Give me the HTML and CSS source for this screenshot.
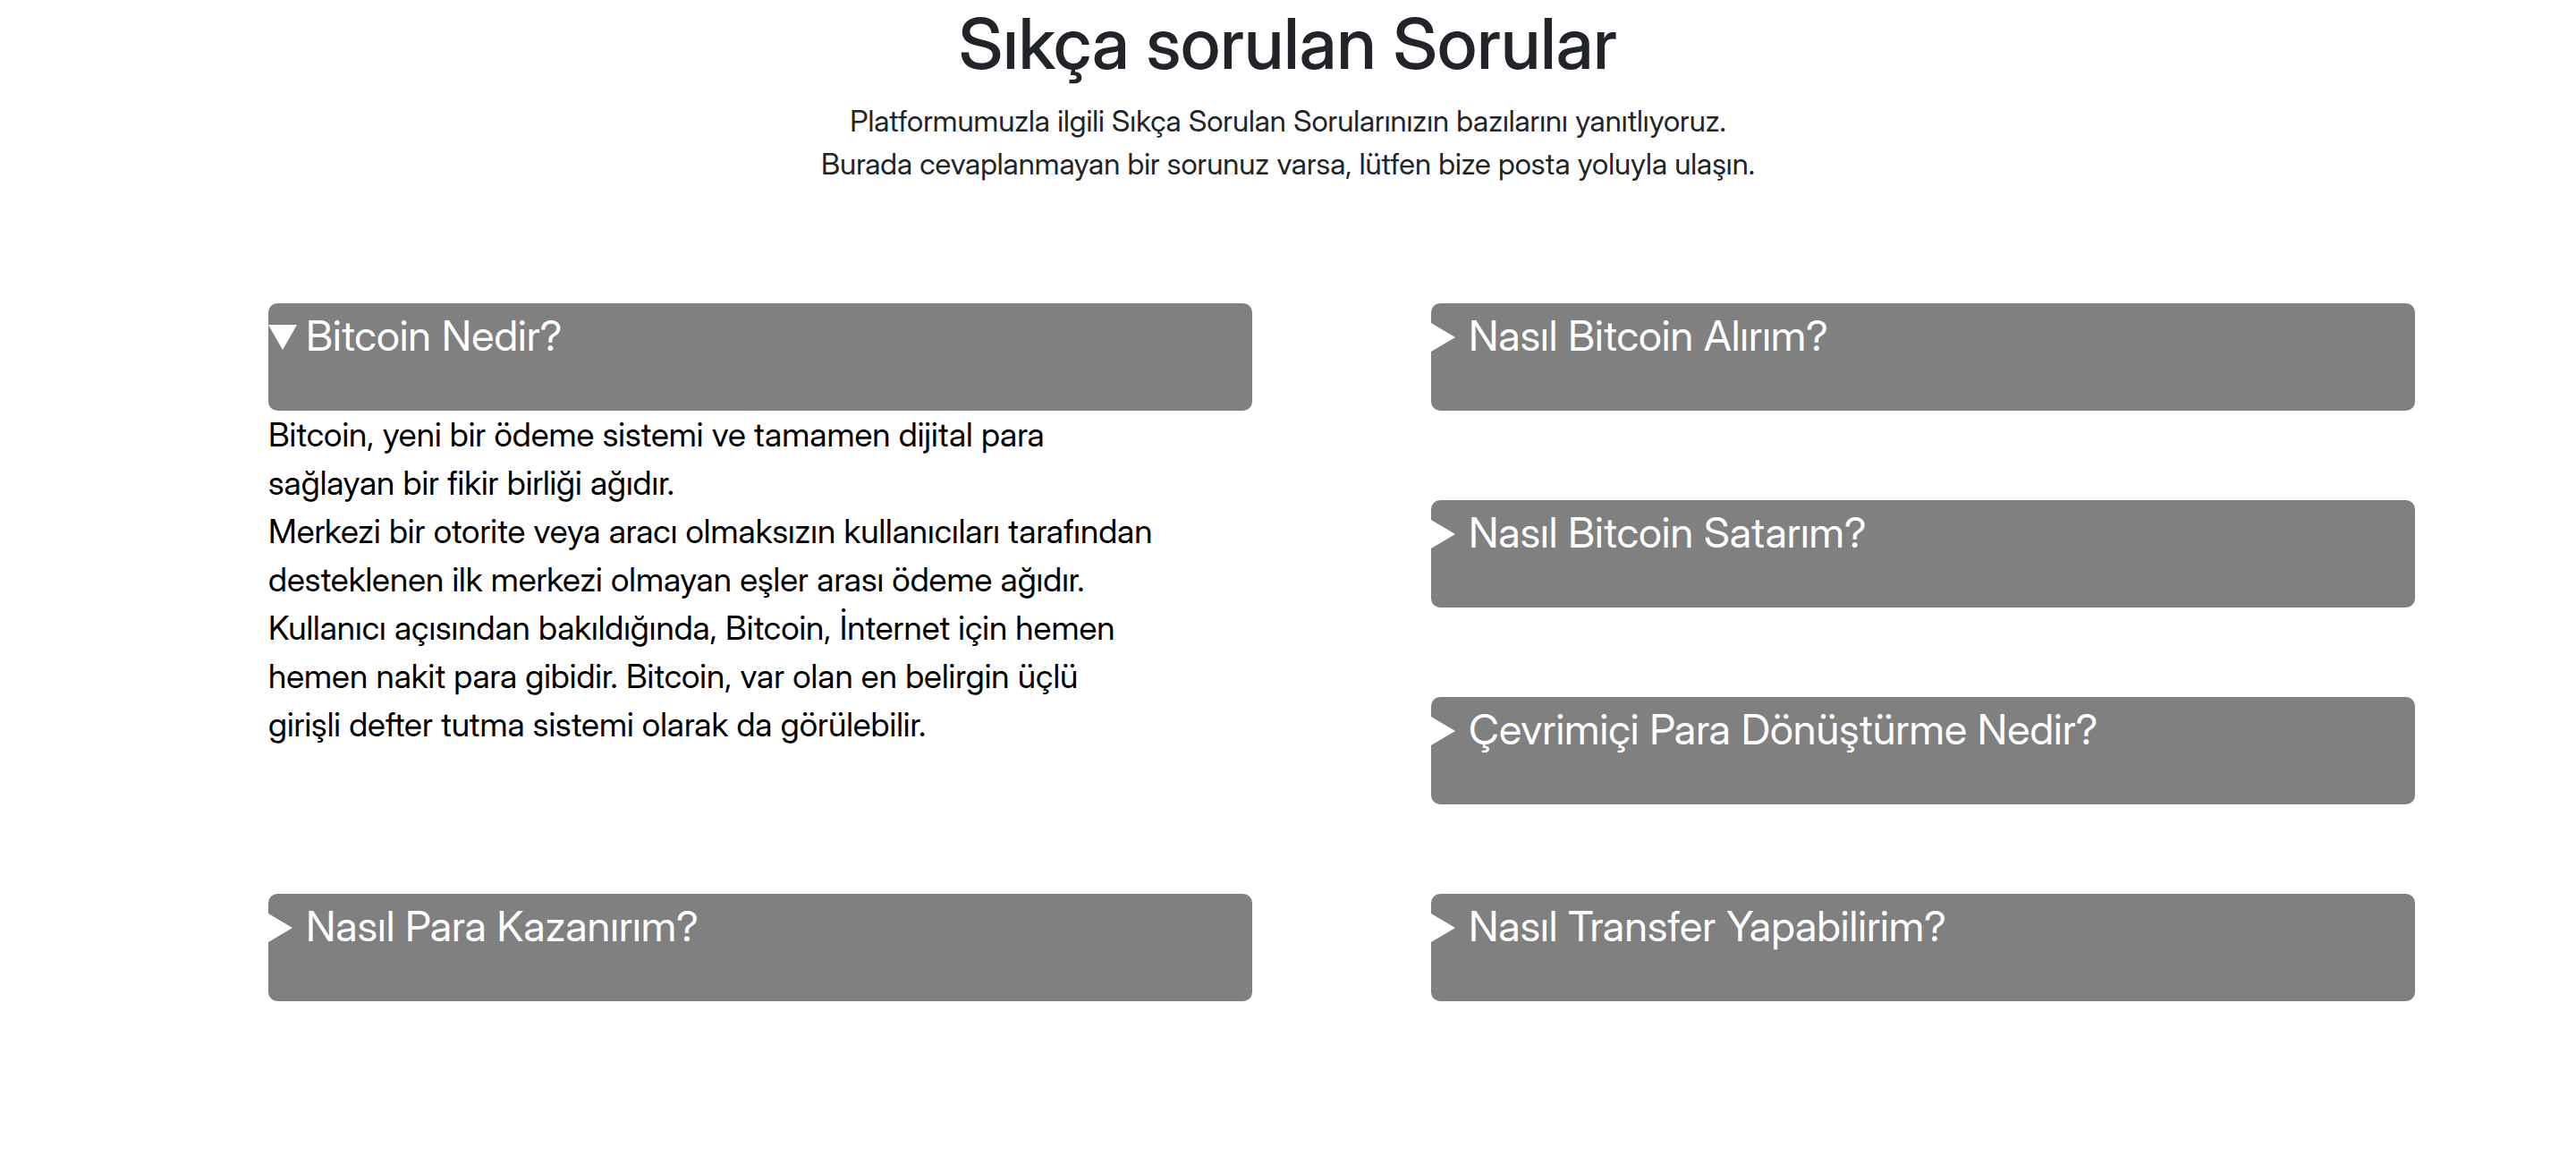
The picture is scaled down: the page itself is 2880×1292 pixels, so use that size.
FILE: index.html
```html
<!DOCTYPE html>
<html lang="tr">
<head>
<meta charset="utf-8">
<title>Sıkça sorulan Sorular</title>
<link rel="stylesheet" href="styles.css">
</head>
<body>
<main class="faq">
  <header class="intro">
    <h1 class="title">Sıkça sorulan Sorular</h1>
    <p class="lead">Platformumuzla ilgili Sıkça Sorulan Sorularınızın bazılarını yanıtlıyoruz.<br>Burada cevaplanmayan bir sorunuz varsa, lütfen bize posta yoluyla ulaşın.</p>
  </header>
  <div class="columns">
    <div class="column">
      <details class="item" open>
        <summary class="question"><svg class="marker" viewBox="0 0 34 32" aria-hidden="true"><path d="M0 2H32L16 30Z"/></svg><span>Bitcoin Nedir?</span></summary>
        <p class="answer">Bitcoin, yeni bir ödeme sistemi ve tamamen dijital para<br>sağlayan bir fikir birliği ağıdır.<br>Merkezi bir otorite veya aracı olmaksızın kullanıcıları tarafından<br>desteklenen ilk merkezi olmayan eşler arası ödeme ağıdır.<br>Kullanıcı açısından bakıldığında, Bitcoin, İnternet için hemen<br>hemen nakit para gibidir. Bitcoin, var olan en belirgin üçlü<br>girişli defter tutma sistemi olarak da görülebilir.</p>
      </details>
      <details class="item">
        <summary class="question"><svg class="marker" viewBox="0 0 34 32" aria-hidden="true"><path d="M0 0V32L27 16Z"/></svg><span>Nasıl Para Kazanırım?</span></summary>
      </details>
    </div>
    <div class="column">
      <details class="item">
        <summary class="question"><svg class="marker" viewBox="0 0 34 32" aria-hidden="true"><path d="M0 0V32L27 16Z"/></svg><span>Nasıl Bitcoin Alırım?</span></summary>
      </details>
      <details class="item">
        <summary class="question"><svg class="marker" viewBox="0 0 34 32" aria-hidden="true"><path d="M0 0V32L27 16Z"/></svg><span>Nasıl Bitcoin Satarım?</span></summary>
      </details>
      <details class="item">
        <summary class="question"><svg class="marker" viewBox="0 0 34 32" aria-hidden="true"><path d="M0 0V32L27 16Z"/></svg><span>Çevrimiçi Para Dönüştürme Nedir?</span></summary>
      </details>
      <details class="item">
        <summary class="question"><svg class="marker" viewBox="0 0 34 32" aria-hidden="true"><path d="M0 0V32L27 16Z"/></svg><span>Nasıl Transfer Yapabilirim?</span></summary>
      </details>
    </div>
  </div>
</main>
</body>
</html>
```
FILE: styles.css
```css
* { box-sizing: border-box; }
body {
  margin: 0;
  background: #fff;
  color: #212529;
  font-family: "Inter Display", Inter, "Liberation Sans", sans-serif;
}
.intro { text-align: center; }
.title {
  margin: 0;
  font-size: 79px;
  font-weight: 500;
  line-height: 96px;
}
.lead {
  margin: 15px 0 0;
  font-size: 33px;
  line-height: 48px;
}
.columns {
  display: grid;
  grid-template-columns: 1fr 1fr;
  gap: 200px;
  padding: 132px 180px 0 300px;
}
.item { margin-bottom: 100px; }
.question {
  display: flex;
  gap: 8px;
  height: 120px;
  padding-top: 2px;
  border-radius: 10px;
  background: #808080;
  color: #fff;
  font-size: 47px;
  line-height: 68px;
  list-style: none;
  cursor: pointer;
}
.marker {
  width: 34px;
  height: 32px;
  margin-top: 20px;
  fill: #fff;
}
.answer {
  margin: 0 0 162px;
  color: #000;
  font-size: 37px;
  line-height: 54px;
}
```
